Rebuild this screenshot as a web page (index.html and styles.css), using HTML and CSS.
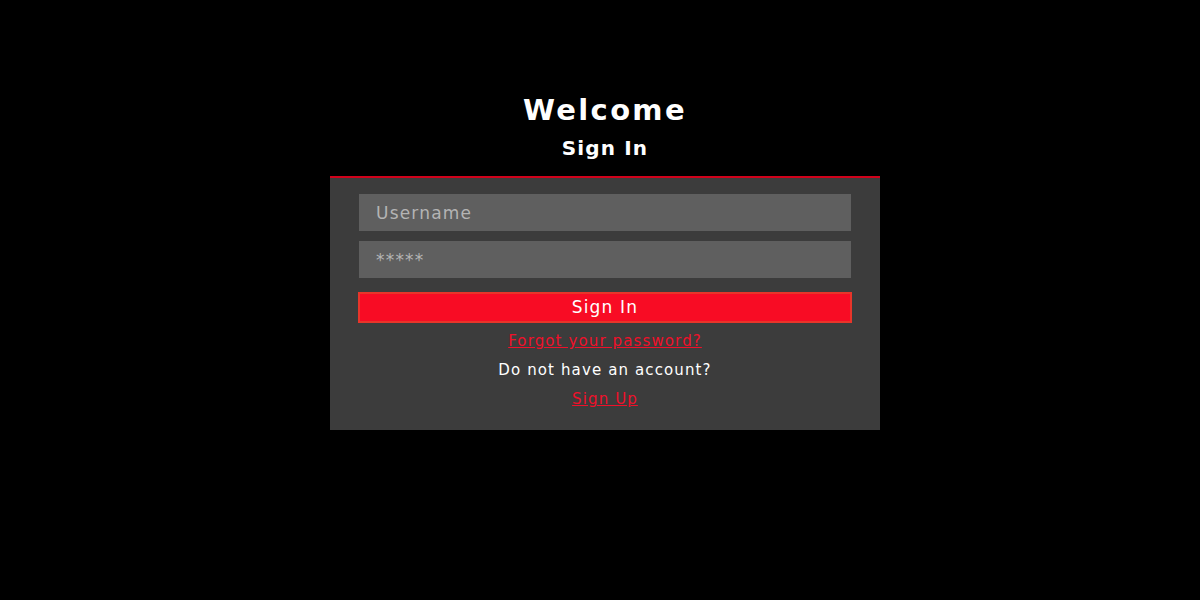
FILE: index.html
```html
<!DOCTYPE html>
<html>
<head>
<meta charset="utf-8">
<link rel="stylesheet" href="styles.css">
</head>
<body>
<main class="page">
  <h1 class="title">Welcome</h1>
  <h2 class="subtitle">Sign In</h2>
  <form class="card">
    <input class="field" type="text" placeholder="Username">
    <input class="field" type="text" placeholder="*****">
    <button class="btn" type="button">Sign In</button>
    <a class="link" href="#">Forgot your password?</a>
    <p class="note">Do not have an account?</p>
    <a class="link" href="#">Sign Up</a>
  </form>
</main>
</body>
</html>
```

FILE: styles.css
```css
html, body {
  margin: 0;
  padding: 0;
  background: #000;
  height: 100%;
}
body {
  font-family: "DejaVu Sans", "Open Sans", sans-serif;
  color: #fff;
  letter-spacing: 0.07em;
}
.page {
  display: flex;
  flex-direction: column;
  align-items: center;
  padding-top: 91px;
  padding-left: 10px;
}
.title {
  margin: 0;
  font-size: 29px;
  font-weight: 600;
  line-height: 38px;
  letter-spacing: 0.08em;
}
.subtitle {
  margin: 0;
  margin-top: 1px;
  font-size: 20px;
  font-weight: 600;
  line-height: 36px;
}
.card {
  box-sizing: border-box;
  width: 550px;
  margin-top: 10px;
  background: #3c3c3c;
  border-top: 2px solid #d0021b;
  padding: 16px 29px 16px;
  display: flex;
  flex-direction: column;
  align-items: center;
}
.field {
  box-sizing: border-box;
  width: 100%;
  height: 37px;
  margin: 0 0 10px;
  border: none;
  outline: none;
  background: #5f5f5f;
  padding: 0 17px;
  font-family: inherit;
  font-size: 17px;
  letter-spacing: 0.07em;
  color: #ddd;
}
.field::placeholder {
  color: #b4b4b4;
}
.btn {
  box-sizing: border-box;
  width: calc(100% + 2px);
  height: 31px;
  margin-top: 4px;
  background: #f80c24;
  border: 2px solid #e8352a;
  color: #fff;
  font-family: inherit;
  font-size: 17px;
  letter-spacing: 0.07em;
  line-height: 1;
  padding: 0;
}
.link {
  color: #f0102a;
  font-size: 15px;
  line-height: 29px;
  text-decoration: underline;
}
.btn + .link {
  margin-top: 4px;
}
.note {
  margin: 0;
  font-size: 15px;
  line-height: 29px;
  color: #fff;
}
```
